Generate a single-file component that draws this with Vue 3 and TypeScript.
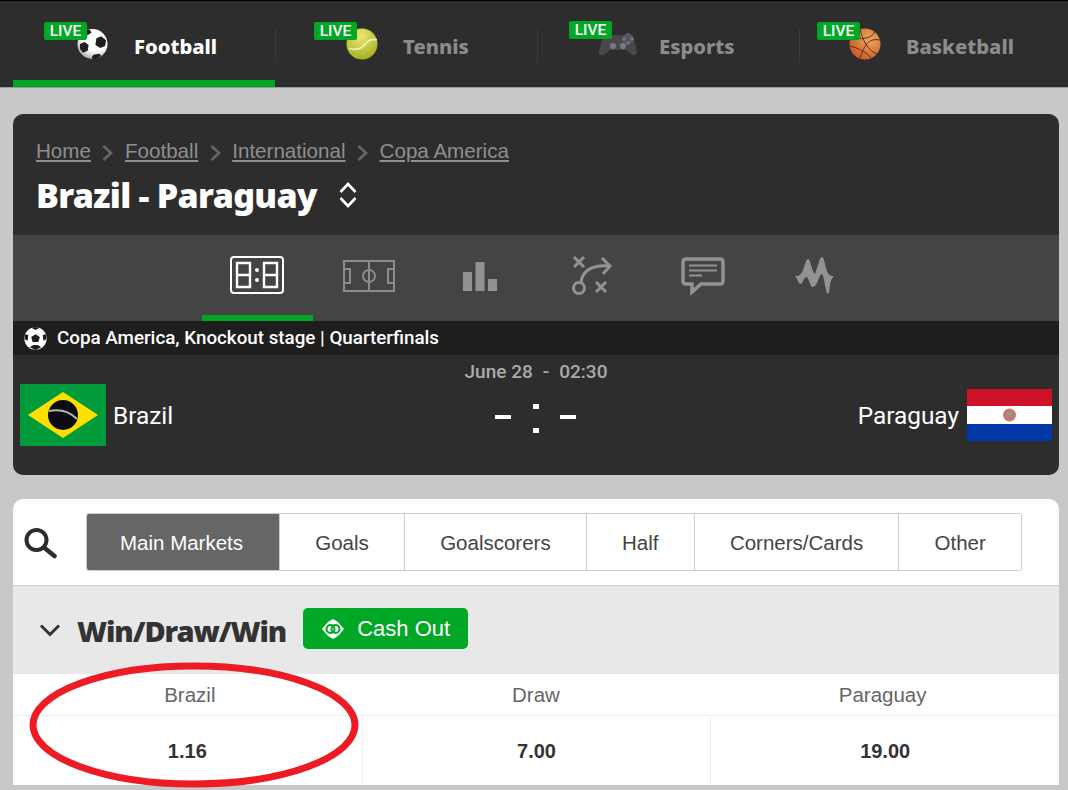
<script setup lang="ts">
const sports = [
  { name: 'Football', icon: 'football', active: true },
  { name: 'Tennis', icon: 'tennis', active: false },
  { name: 'Esports', icon: 'esports', active: false },
  { name: 'Basketball', icon: 'basketball', active: false },
]
const crumbs = ['Home', 'Football', 'International', 'Copa America']
const tabs = ['Main Markets', 'Goals', 'Goalscorers', 'Half', 'Corners/Cards', 'Other']
const odds = [
  { label: 'Brazil', value: '1.16' },
  { label: 'Draw', value: '7.00' },
  { label: 'Paraguay', value: '19.00' },
]
</script>

<template>
  <div class="page">
    <nav class="sports">
      <a v-for="s in sports" :key="s.name" class="sport" :class="[s.icon, { active: s.active }]">
        <span class="sport-icon">
          <span class="live">LIVE</span>
          <svg v-if="s.icon === 'football'" width="31" height="32" viewBox="0 0 32 32">
            <defs>
              <radialGradient id="ballShade" cx="0.6" cy="0.3" r="0.8">
                <stop offset="0.55" stop-color="#fff" />
                <stop offset="1" stop-color="#9c9c9c" />
              </radialGradient>
            </defs>
            <circle cx="16" cy="16" r="15.5" fill="url(#ballShade)" />
            <path d="M20 10l5-2 5 4-1 6-5 2-5-3zM3 16l5-2 4 3-1 6-5 2-3-4zM15 30l2-3 6-1 2 2-4 3-4 1zM7 2l6-1 2 3-4 3-4-1z" fill="#1f1f1f" />
          </svg>
          <svg v-else-if="s.icon === 'tennis'" width="32" height="32" viewBox="0 0 32 32">
            <defs>
              <radialGradient id="tennisShade" cx="0.45" cy="0.25" r="0.85">
                <stop offset="0.1" stop-color="#e6e26a" />
                <stop offset="1" stop-color="#9aa814" />
              </radialGradient>
            </defs>
            <circle cx="16" cy="16" r="15.5" fill="url(#tennisShade)" />
            <path d="M3 20c7 3 13 1 18-6 2-2 6-3 10-2" fill="none" stroke="#ecefc4" stroke-width="1.8" />
          </svg>
          <svg v-else-if="s.icon === 'esports'" width="38" height="24" viewBox="0 0 38 24">
            <path d="M9 3h20c4 0 6 3 7 8l2 9c0 3-3 4-5 3l-6-5H11l-6 5c-2 1-5 0-5-3l2-9c1-5 3-8 7-8z" fill="#48484b" />
            <circle cx="29" cy="7" r="5.500" fill="#55555c" />
            <circle cx="29" cy="2.500" r="1.800" fill="#5e4f70" />
            <circle cx="25" cy="7" r="1.800" fill="#77777c" />
            <circle cx="33" cy="7" r="1.800" fill="#77777c" />
            <circle cx="29" cy="11" r="1.800" fill="#77777c" />
            <circle cx="14" cy="14" r="3" fill="#7a7a7e" />
            <circle cx="24" cy="14" r="3" fill="#7a7a7e" />
          </svg>
          <svg v-else width="32" height="32" viewBox="0 0 32 32">
            <defs>
              <radialGradient id="hoopShade" cx="0.65" cy="0.35" r="0.8">
                <stop offset="0.1" stop-color="#e8a05a" />
                <stop offset="1" stop-color="#c64f1f" />
              </radialGradient>
            </defs>
            <circle cx="16" cy="16" r="15.5" fill="url(#hoopShade)" />
            <path d="M11 1c2 10 8 22 17 25M2 10c9 0 20 3 24-7M1 18c8 2 18 7 21 12M31 12c-10-2-15 3-20 18" fill="none" stroke="#50241a" stroke-width="0.9" />
          </svg>
        </span>
        <span class="sport-name">{{ s.name }}</span>
      </a>
    </nav>

    <section class="match">
      <header class="match-head">
        <div class="crumbs">
          <template v-for="(c, i) in crumbs" :key="c">
            <svg v-if="i > 0" class="crumb-sep" width="11" height="18" viewBox="0 0 11 18">
              <path d="M1.500 2l7.500 7-7.500 7" fill="none" stroke="#666" stroke-width="2.600" />
            </svg>
            <a class="crumb">{{ c }}</a>
          </template>
        </div>
        <h1 class="match-title">
          Brazil - Paraguay
          <svg width="20" height="28" viewBox="0 0 20 28">
            <path d="M2.500 11L10 3l7.500 8M2.500 17l7.500 8 7.500-8" fill="none" stroke="#fff" stroke-width="2.600" />
          </svg>
        </h1>
      </header>

      <div class="views">
        <div class="view active">
          <svg width="54" height="38" viewBox="0 0 54 38" fill="none" stroke="#fff">
            <rect x="1" y="1" width="52" height="36" rx="3" stroke-width="2" />
            <path d="M7 7h13v24H7zM7 19h13M34 7h13v24H34zM34 19h13" stroke-width="2.400" />
            <circle cx="27" cy="14" r="2" fill="#fff" stroke="none" />
            <circle cx="27" cy="24" r="2" fill="#fff" stroke="none" />
          </svg>
        </div>
        <div class="view">
          <svg width="52" height="32" viewBox="0 0 52 32" fill="none" stroke="#8c8c8c" stroke-width="2">
            <rect x="1" y="1" width="50" height="30" />
            <path d="M26 1v30M1 9h6v14H1M51 9h-6v14h6" />
            <circle cx="26" cy="16" r="6" />
          </svg>
        </div>
        <div class="view">
          <svg width="34" height="29" viewBox="0 0 34 29" fill="#929292">
            <rect x="0" y="10" width="9" height="19" />
            <rect x="12.500" y="0" width="9" height="29" />
            <rect x="25" y="17" width="9" height="12" />
          </svg>
        </div>
        <div class="view">
          <svg width="42" height="42" viewBox="0 0 42 42" fill="none" stroke="#929292" stroke-width="3">
            <path d="M3 2l10 10M13 2L3 12M25 27l10 10M35 27L25 37" />
            <circle cx="8" cy="33" r="5.500" />
            <path d="M10 27c2-12 12-17 28-16M31 3l8 8-7 8" />
          </svg>
        </div>
        <div class="view">
          <svg width="46" height="40" viewBox="0 0 46 40" fill="none" stroke="#929292">
            <path d="M6 3h34c2 0 3 1 3 3v19c0 2-1 3-3 3H21l-9 8v-8H6c-2 0-3-1-3-3V6c0-2 1-3 3-3z" stroke-width="3.500" />
            <path d="M9 9.500h28M9 14.500h28M9 19.500h13" stroke-width="2" />
          </svg>
        </div>
        <div class="view">
          <svg width="40" height="38" viewBox="0 0 40 38">
            <path d="M0 19C4 19 6 18 8 13C10 8 11 2 13 2C15 2 16 9 18 14C19 17 20 18 21 14C23 8 25 0 27 0C29 0 30 8 32 14C33 17 35 19 39 19C37 21 36 23 35 28C34.500 33 34 37 33 37C32 37 31 33 30 28C29 23 28 17 27 17C25 17 24 22 22 26C20 30 17 31 16 29C15 27 13 20 11.500 20C10 20 9 22 7 26C6 28 4 27 3 24C2 22 1 20 0 19z" fill="#929292" />
          </svg>
        </div>
      </div>

      <div class="competition">
        <svg width="23" height="23" viewBox="0 0 32 32">
          <circle cx="16" cy="16" r="15.500" fill="#fff" />
          <path d="M16 10l6 4-2 7h-8l-2-7zM10 1l6 3 6-3-6-1zM1 10l5 1-1 8-4-2zM31 10l-5 1 1 8 4-2zM8 28l5-3h6l5 3-8 4z" fill="#1e1e1e" />
        </svg>
        <span>Copa America, Knockout stage | Quarterfinals</span>
      </div>

      <div class="score-row">
        <div class="team">
          <svg width="86" height="62" viewBox="0 0 86 62">
            <rect width="86" height="62" fill="#009b3a" />
            <path d="M43 8l35 23-35 23L8 31z" fill="#fedf00" />
            <circle cx="43" cy="31" r="15" fill="#0c0c10" />
            <path d="M29 27c10-2 20 0 28 8" fill="none" stroke="#a4bdb4" stroke-width="2" />
          </svg>
          <span class="team-name">Brazil</span>
        </div>
        <div class="score-mid">
          <div class="kickoff"><span>June 28</span><span>-</span><span>02:30</span></div>
          <div class="score">
            <i class="dash" />
            <span class="colon"><i /><i /></span>
            <i class="dash" />
          </div>
        </div>
        <div class="team right">
          <span class="team-name">Paraguay</span>
          <svg width="85" height="52" viewBox="0 0 85 52">
            <rect width="85" height="18" fill="#ce1126" />
            <rect y="17" width="85" height="18" fill="#fff" />
            <rect y="35" width="85" height="17" fill="#0038a8" />
            <circle cx="42.500" cy="26" r="6.500" fill="#c77a70" />
            <circle cx="42.500" cy="26" r="2.500" fill="#7f9f86" />
          </svg>
        </div>
      </div>
    </section>

    <section class="markets">
      <div class="market-tabs">
        <svg class="search" width="34" height="34" viewBox="0 0 34 34" fill="none" stroke="#2c2c2c">
          <circle cx="12.500" cy="15" r="10" stroke-width="4" />
          <path d="M20 22.500L30.500 31" stroke-width="4.500" stroke-linecap="round" />
        </svg>
        <div class="tabs">
          <button v-for="(t, i) in tabs" :key="t" class="tab" :class="{ on: i === 0 }">{{ t }}</button>
        </div>
      </div>
      <div class="market-head">
        <svg width="22" height="14" viewBox="0 0 22 14">
          <path d="M2 2.500l9 9 9-9" fill="none" stroke="#333" stroke-width="3" />
        </svg>
        <h2>Win/Draw/Win</h2>
        <button class="cashout">
          <svg width="24" height="24" viewBox="0 0 24 24" fill="none" stroke="#fff">
            <path d="M1 12l6-7 5-3 5 3 6 7-6 7-5 3-5-3z" fill="#fff" stroke="none" />
            <circle cx="9.500" cy="12" r="4" stroke="#00a826" stroke-width="2" />
            <circle cx="14.500" cy="12" r="4" stroke="#00a826" stroke-width="2" />
          </svg>
          Cash Out
        </button>
      </div>
      <div class="odds">
        <div v-for="o in odds" :key="o.label" class="odd">
          <div class="odd-label">{{ o.label }}</div>
          <div class="odd-value">{{ o.value }}</div>
        </div>
      </div>
    </section>

    <svg class="circled" width="334" height="130" viewBox="0 0 334 130">
      <ellipse cx="165" cy="65" rx="161" ry="59" fill="none" stroke="#ed1c24" stroke-width="7" />
    </svg>
  </div>
</template>

<style>
html, body {
  margin: 0;
  overflow: hidden;
}
</style>

<style scoped>
.page {
  position: relative;
  width: 1068px;
  height: 790px;
  overflow: hidden;
  background: #c8c8c8;
  font-family: "Liberation Sans", Arial, sans-serif;
}

.sports {
  display: flex;
  height: 86px;
  padding-left: 13px;
  background: #2d2d2d;
  border-top: 1px solid #000;
  border-bottom: 1px solid #9a9a9a;
}

.sport {
  position: relative;
  display: flex;
  align-items: center;
  width: 262px;
  box-sizing: border-box;
  color: #8c8c8c;
  font-family: "Noto Sans", sans-serif;
  font-size: 20.200px;
  font-weight: 800;
}

.sport.football { padding-left: 64px; gap: 26px; }
.sport.tennis { padding-left: 71px; gap: 25px; }
.sport.esports { padding-left: 62px; gap: 22px; }
.sport.basketball { padding-left: 50px; gap: 25px; }

.sport + .sport::before {
  content: '';
  position: absolute;
  left: 0;
  top: 27px;
  height: 34px;
  border-left: 1px solid #3a3a3a;
}

.sport.active {
  color: #fff;
}

.sport.active::after {
  content: '';
  position: absolute;
  left: 0;
  right: 0;
  bottom: 0;
  height: 7px;
  background: #00a826;
}

.sport-name {
  margin-top: 4px;
}

.sport-icon {
  position: relative;
  display: flex;
}

.live {
  position: absolute;
  left: -32px;
  top: -6px;
  width: 43px;
  height: 18px;
  border-radius: 2px;
  background: #00a826;
  color: #fff;
  font-family: Roboto, sans-serif;
  font-size: 15.500px;
  font-weight: 500;
  line-height: 18px;
  text-align: center;
}

.football .live { left: -33px; }
.esports .live { left: -30px; top: -11px; }

.match {
  margin: 26px 9px 0 13px;
  border-radius: 10px;
  overflow: hidden;
  background: #2d2d2d;
  color: #fff;
}

.match-head {
  height: 121px;
  box-sizing: border-box;
  padding: 25px 23px 0;
}

.crumbs {
  display: flex;
  align-items: center;
  gap: 11.500px;
  font-size: 20.600px;
  line-height: 24px;
}

.crumb {
  color: #8f8f8f;
  text-decoration: underline;
}

.crumb-sep {
  margin-top: 4px;
}

.match-title {
  display: flex;
  align-items: center;
  gap: 21px;
  margin: 9px 0 0;
  font-family: "Noto Sans", sans-serif;
  font-size: 34px;
  font-weight: 900;
  letter-spacing: -0.700px;
  line-height: 46px;
}

.views {
  display: flex;
  justify-content: center;
  height: 86px;
  background: #444;
}

.view {
  display: flex;
  align-items: center;
  justify-content: center;
  width: 111.500px;
  box-sizing: border-box;
  padding-bottom: 4px;
}

.view.active {
  padding-bottom: 0;
  border-bottom: 6px solid #00a826;
}

.competition {
  display: flex;
  align-items: center;
  gap: 10px;
  height: 34px;
  padding-left: 11px;
  background: #1e1e1e;
  font-family: Roboto, sans-serif;
  font-size: 18.800px;
  font-weight: 500;
}

.score-row {
  display: grid;
  grid-template-columns: 1fr auto 1fr;
  height: 120px;
  padding: 0 7px;
}

.team {
  display: flex;
  align-items: center;
  gap: 7px;
  height: 62px;
  margin-top: 29px;
}

.team.right {
  justify-content: flex-end;
  gap: 8px;
}

.team-name {
  margin-top: 1px;
  font-family: Roboto, sans-serif;
  font-size: 24.400px;
}

.score-mid {
  display: flex;
  flex-direction: column;
  align-items: center;
}

.kickoff {
  display: flex;
  gap: 10px;
  margin-top: 6px;
  color: #aaa;
  font-family: Roboto, sans-serif;
  font-size: 19px;
  font-weight: 500;
  line-height: 22px;
}

.score {
  display: flex;
  align-items: center;
  gap: 21.500px;
  margin-top: 21px;
}

.dash {
  width: 16px;
  height: 4px;
  margin-bottom: 3px;
  background: #fff;
}

.colon {
  display: flex;
  flex-direction: column;
  gap: 19px;
}

.colon i {
  width: 6px;
  height: 5px;
  background: #fff;
}

.markets {
  height: 286px;
  margin: 24px 9px 0 13px;
  border-radius: 10px 10px 0 0;
  background: #fff;
}

.market-tabs {
  display: flex;
  align-items: center;
  gap: 28px;
  height: 87px;
  box-sizing: border-box;
  padding-left: 11px;
  border-bottom: 1px solid #ccc;
}

.search {
  flex: none;
}

.tabs {
  display: flex;
  height: 58px;
  box-sizing: border-box;
  border: 1px solid #ccc;
  border-radius: 3px;
  overflow: hidden;
}

.tab {
  padding: 1px 35.200px 0;
  border: 0;
  border-left: 1px solid #ccc;
  background: #fff;
  color: #444;
  font-family: inherit;
  font-size: 20.500px;
}

.tab:first-child {
  padding-left: 33px;
  padding-right: 36px;
  border-left: 0;
}

.tab.on {
  background: #666;
  color: #fff;
}

.market-head {
  display: flex;
  align-items: center;
  height: 88px;
  padding-left: 26px;
  background: #e8e8e8;
}

.market-head h2 {
  margin: 0 17px 0 16px;
  color: #333;
  font-family: "Noto Sans", sans-serif;
  font-size: 29px;
  font-weight: 900;
  letter-spacing: -1.100px;
}

.cashout {
  display: flex;
  align-items: center;
  gap: 12px;
  height: 41px;
  margin-top: -3px;
  padding: 0 18px;
  border: 0;
  border-radius: 5px;
  background: #00a826;
  color: #fff;
  font-family: inherit;
  font-size: 22px;
}

.odds {
  display: grid;
  grid-template-columns: repeat(3, 1fr);
}

.odd + .odd .odd-value {
  border-left: 1px solid #efefef;
}

.odd-label {
  height: 41px;
  border-bottom: 1px solid #efefef;
  color: #666;
  font-size: 20.500px;
  line-height: 42px;
  text-align: center;
}

.odd:first-child .odd-label {
  padding-left: 5px;
}

.odd:last-child .odd-label {
  padding-right: 4px;
}

.odd-value {
  height: 69px;
  color: #333;
  font-size: 20px;
  font-weight: 700;
  line-height: 70px;
  text-align: center;
}

.circled {
  position: absolute;
  left: 29px;
  top: 660px;
}
</style>
